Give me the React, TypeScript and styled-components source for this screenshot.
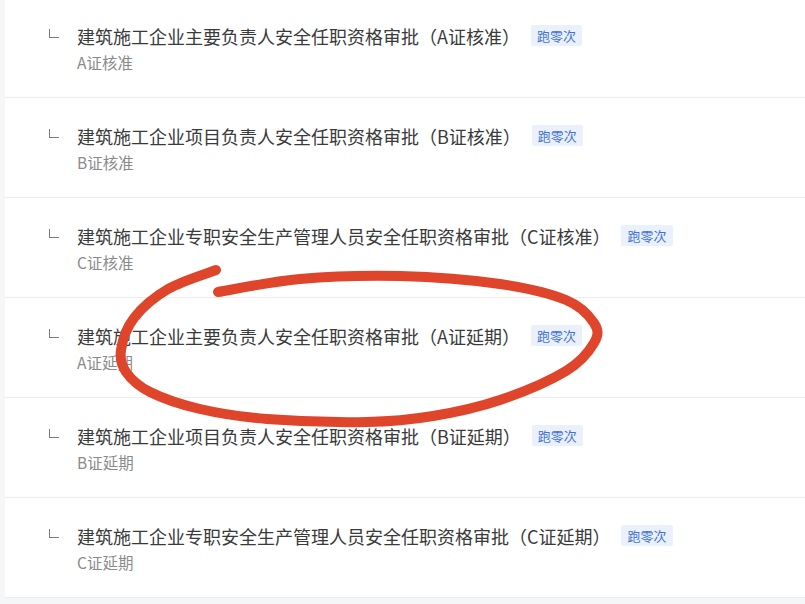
import styled, { createGlobalStyle } from "styled-components";

const GlobalStyle = createGlobalStyle`
  html, body {
    margin: 0;
    padding: 0;
    background: #f4f6f8;
    overflow: hidden;
  }
  body {
    font-family: "Noto Sans CJK SC", "Noto Sans", sans-serif;
  }
`;

const Page = styled.div`
  position: relative;
  width: 805px;
  height: 604px;
  overflow: hidden;
`;

const List = styled.div`
  margin: -2px 0 0 5px;
  background: #ffffff;
`;

const Row = styled.div`
  padding: 25px 0 24px 44px;
  border-bottom: 1px solid #ececec;
`;

const Head = styled.div`
  display: flex;
  align-items: center;
  height: 26px;
`;

const Corner = styled.span`
  width: 9px;
  height: 8px;
  margin: -5px 18px 0 0;
  border-left: 1px solid #7a7a7a;
  border-bottom: 1px solid #7a7a7a;
  flex-shrink: 0;
`;

const Title = styled.span`
  font-size: 18px;
  line-height: 26px;
  color: #3a3a3a;
  white-space: nowrap;
`;

const Tag = styled.span`
  margin: -2px 0 0 11px;
  height: 21px;
  padding: 0 6px;
  background: #eaf1fd;
  color: #4272cf;
  font-size: 13px;
  line-height: 21px;
  border-radius: 2px;
`;

const Sub = styled.div`
  margin: 2px 0 0 28px;
  font-size: 15.5px;
  line-height: 22px;
  color: #8a8a8a;
`;

const Mark = styled.svg`
  position: absolute;
  left: 0;
  top: 0;
  pointer-events: none;
`;

const items = [
  { title: "建筑施工企业主要负责人安全任职资格审批（A证核准）", sub: "A证核准" },
  { title: "建筑施工企业项目负责人安全任职资格审批（B证核准）", sub: "B证核准" },
  { title: "建筑施工企业专职安全生产管理人员安全任职资格审批（C证核准）", sub: "C证核准" },
  { title: "建筑施工企业主要负责人安全任职资格审批（A证延期）", sub: "A证延期" },
  { title: "建筑施工企业项目负责人安全任职资格审批（B证延期）", sub: "B证延期" },
  { title: "建筑施工企业专职安全生产管理人员安全任职资格审批（C证延期）", sub: "C证延期" },
];

// hand-drawn circle, points traced from the screenshot
const pts: [number, number][] = [
  [216, 270], [168, 289], [134, 318], [121, 350], [126, 372], [150, 392],
  [200, 409], [267, 419], [367, 422], [433, 416], [500, 400], [566, 371],
  [594, 343], [594, 323], [566, 300], [500, 284], [400, 276], [300, 279],
  [218, 292],
];

function smooth(p: [number, number][]) {
  let d = `M${p[0][0]} ${p[0][1]}`;
  for (let i = 0; i < p.length - 1; i++) {
    const p0 = p[i - 1] || p[i];
    const p1 = p[i];
    const p2 = p[i + 1];
    const p3 = p[i + 2] || p2;
    const c1x = p1[0] + (p2[0] - p0[0]) / 6;
    const c1y = p1[1] + (p2[1] - p0[1]) / 6;
    const c2x = p2[0] - (p3[0] - p1[0]) / 6;
    const c2y = p2[1] - (p3[1] - p1[1]) / 6;
    d += ` C${c1x} ${c1y} ${c2x} ${c2y} ${p2[0]} ${p2[1]}`;
  }
  return d;
}

export default function App() {
  return (
    <Page>
      <GlobalStyle />
      <List>
        {items.map((it) => (
          <Row key={it.title}>
            <Head>
              <Corner />
              <Title>{it.title}</Title>
              <Tag>跑零次</Tag>
            </Head>
            <Sub>{it.sub}</Sub>
          </Row>
        ))}
      </List>
      <Mark width="805" height="604" viewBox="0 0 805 604">
        <path
          d={smooth(pts)}
          fill="none"
          stroke="#df452a"
          strokeWidth="10"
          strokeLinecap="round"
          strokeLinejoin="round"
        />
      </Mark>
    </Page>
  );
}
